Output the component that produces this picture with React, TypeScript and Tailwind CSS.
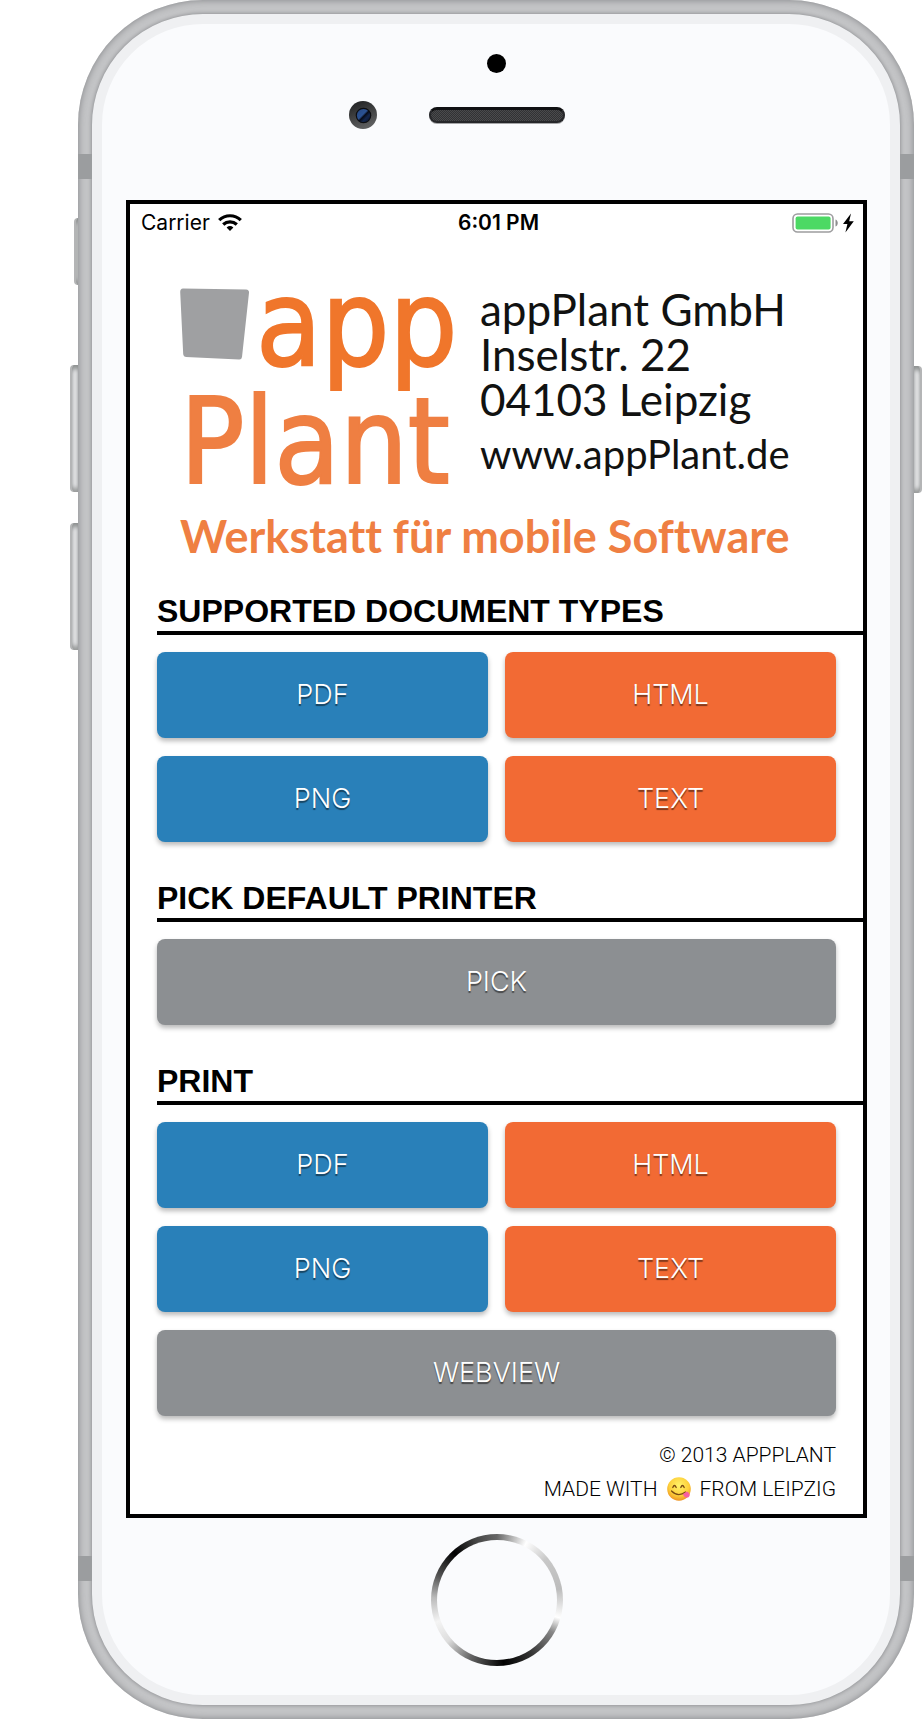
import React from "react";

const tones = {
  blue: "bg-[#2980b9]",
  orange: "bg-[#f26a34]",
  gray: "bg-[#8c8f92]",
};

type Tone = keyof typeof tones;

function ActionButton({ label, tone, wide = false }: { label: string; tone: Tone; wide?: boolean }) {
  return (
    <button
      type="button"
      className={`${tones[tone]} ${wide ? "col-span-2" : ""} h-[86px] rounded-lg font-[Inter,sans-serif] text-[27px] leading-8 font-light text-white shadow-[0_3px_5px_rgba(0,0,0,0.28)] [text-shadow:0_2px_1px_rgba(0,0,0,0.5)]`}
    >
      {label}
    </button>
  );
}

function Section({ title, children }: { title: string; children: React.ReactNode }) {
  return (
    <section className="mt-9 first:mt-[33px]">
      <h2 className="ml-[27px] border-b-4 border-black font-['Liberation_Sans',Arial,sans-serif] text-[32px] leading-10 font-bold whitespace-nowrap">
        {title}
      </h2>
      <div className="mt-[17px] mr-[27px] ml-[27px] grid grid-cols-2 gap-x-[17px] gap-y-[18px]">{children}</div>
    </section>
  );
}

function WifiIcon() {
  return (
    <svg viewBox="0 0 24 17" className="h-[17px] w-6" fill="none" stroke="black" strokeWidth="3.200" aria-hidden="true">
      <path d="M1.200 6.100a15.600 15.600 0 0 1 21.600 0" />
      <path d="M5.200 10.500a10 10 0 0 1 13.600 0" />
      <path d="M8.600 13.400a5.200 5.200 0 0 1 6.800 0L12 17z" fill="black" stroke="none" />
    </svg>
  );
}

function BatteryIcon() {
  return (
    <svg viewBox="0 0 64 20" className="h-5 w-16" role="img" aria-label="Battery charging">
      <rect x="1" y="1" width="40" height="18" rx="4.5" fill="white" stroke="#9d9d9f" strokeWidth="1.6" />
      <rect x="3.600" y="3.600" width="35" height="13" rx="2" fill="#4cd964" />
      <path d="M43.500 6.500c3 1 3 6 0 7z" fill="#8d8d8f" />
      <path d="M59 .600 51 11h4.400l-2 8.400 8.400-11.200h-4.600z" fill="black" />
    </svg>
  );
}

function Bucket() {
  return (
    <svg viewBox="0 0 70 72" className="h-[72px] w-[70px] shrink-0" aria-hidden="true">
      <path d="M3 .4 66 1.600q3.200.2 3 3.200L62 69q-.4 2.800-3 2.600L6 69q-2.600-.2-2.800-2.800L.2 4Q.2.400 3 .4z" fill="#9fa0a2" />
    </svg>
  );
}

function YumEmoji() {
  return (
    <svg viewBox="0 0 24 24" className="h-6 w-6" role="img" aria-label="Face savoring food">
      <defs>
        <radialGradient id="face" cx="50%" cy="35%" r="65%">
          <stop offset="0" stopColor="#fff36a" />
          <stop offset="0.65" stopColor="#fdcf3a" />
          <stop offset="1" stopColor="#ee9323" />
        </radialGradient>
      </defs>
      <circle cx="12" cy="12" r="11.800" fill="url(#face)" />
      <path d="M5.800 10.500q1.600-4 3.400 0M13.800 10.500q1.600-4 3.400 0" fill="none" stroke="#7a4a12" strokeWidth="1.300" strokeLinecap="round" />
      <path d="M4.500 14q6.500 6.500 14 1" fill="none" stroke="#7a4a12" strokeWidth="1.200" strokeLinecap="round" />
      <path d="M15.800 17.200l4-2.600c3 1 4 4.400 1.700 5.600-2.200 1.200-4.600-.4-5.700-3z" fill="#f75fa0" />
    </svg>
  );
}

function Camera() {
  return (
    <svg viewBox="0 0 28 28" className="h-7 w-7" aria-hidden="true">
      <defs>
        <linearGradient id="rim" x1="0" y1="0" x2="0.4" y2="1">
          <stop offset="0" stopColor="#1c1d1e" />
          <stop offset="1" stopColor="#5c5d5e" />
        </linearGradient>
        <linearGradient id="lens" x1="0.1" y1="0.1" x2="0.9" y2="0.9">
          <stop offset="0" stopColor="#274a86" />
          <stop offset="0.42" stopColor="#2b5292" />
          <stop offset="0.55" stopColor="#070b18" />
          <stop offset="0.75" stopColor="#14264c" />
          <stop offset="1" stopColor="#0a1530" />
        </linearGradient>
      </defs>
      <circle cx="14" cy="14" r="14" fill="url(#rim)" />
      <circle cx="14.500" cy="14.500" r="7.800" fill="#0b0c10" />
      <circle cx="14.500" cy="14.500" r="6.600" fill="url(#lens)" />
    </svg>
  );
}

const sideKey =
  "rounded-l-[4px] border-l-2 border-[#b4b5b6] bg-[#e4e5e7] shadow-[inset_0_5px_4px_-1px_#8f9292,inset_0_-5px_4px_-1px_#9c9e9e]";

export default function App() {
  return (
    <main className="flex bg-white pl-[70px] text-black">
      <div className="flex w-2 flex-col items-end pt-[218px]" aria-hidden="true">
        <div className={`${sideKey} h-[67px] w-1`} />
        <div className={`${sideKey} mt-20 h-[127px] w-2`} />
        <div className={`${sideKey} mt-[31px] h-[127px] w-2`} />
      </div>

      <div className="relative min-w-0 flex-1 rounded-[125px] bg-[#c3c4c6] p-[14px] shadow-[inset_0_0_7px_#808285]">
        <div className="absolute top-[154px] left-0 h-[25px] w-[14px] bg-[#9b9d9f]" />
        <div className="absolute top-[154px] right-0 h-[25px] w-[14px] bg-[#9b9d9f]" />
        <div className="absolute bottom-[138px] left-0 h-[25px] w-[14px] bg-[#9b9d9f]" />
        <div className="absolute right-0 bottom-[138px] h-[25px] w-[14px] bg-[#9b9d9f]" />

        <div className="rounded-[111px] border-[10px] border-[#eff0f2] bg-[#fafbfd] pt-[30px] pr-[23px] pb-[29px] pl-6 shadow-[0_0_4px_#808285]">
          <div className="flex flex-col items-center gap-7" aria-hidden="true">
            <div className="size-[19px] rounded-full bg-black" />
            <div className="grid w-full grid-cols-[1fr_136px_1fr] items-center">
              <div className="flex justify-end pr-[52px]">
                <Camera />
              </div>
              <div className="h-4 rounded-full border-2 border-t-[3px] border-[#26272a] border-t-[#101113] bg-[#3d3e40] bg-[repeating-conic-gradient(#4a4b4d_0%_25%,#313234_0%_50%)] bg-[length:2px_2px] shadow-[0_1px_0_#a5a6a8]" />
            </div>
          </div>

          <div className="mt-[71px] border-4 border-black bg-white pb-2">
            <div className="grid h-[37px] grid-cols-[1fr_auto_1fr] items-center pr-[7px] pl-[11px] font-[Inter,sans-serif] text-[21px] leading-6">
              <div className="flex items-center gap-2">
                <span>Carrier</span>
                <WifiIcon />
              </div>
              <time className="font-semibold">6:01 PM</time>
              <div className="flex justify-end">
                <BatteryIcon />
              </div>
            </div>

            <header className="px-[50px] pt-6">
              <div className="flex gap-[30px]">
                <div className="w-[270px] font-['DejaVu_Sans_Condensed','DejaVu_Sans',sans-serif] text-[119px] leading-[118px] whitespace-nowrap [-webkit-text-stroke:2px_currentColor]">
                  <div className="flex items-center gap-[6px] text-[#f0762b]">
                    <Bucket />
                    <span>app</span>
                  </div>
                  <div className="text-[#ef7f42]">Plant</div>
                </div>
                <address className="pt-[22px] font-[Lato,sans-serif] text-[44px] leading-[45px] whitespace-nowrap text-[#111211] not-italic">
                  <p>appPlant GmbH</p>
                  <p>Inselstr. 22</p>
                  <p>04103 Leipzig</p>
                  <p className="mt-[10px] text-[40px]">
                    <a href="http://www.appPlant.de">www.appPlant.de</a>
                  </p>
                </address>
              </div>
              <p className="mt-[13px] font-[Lato,sans-serif] text-[45px] leading-[44px] font-bold whitespace-nowrap text-[#ef7f42] [font-variant-ligatures:none]">
                Werkstatt für mobile Software
              </p>
            </header>

            <div>
              <Section title="SUPPORTED DOCUMENT TYPES">
                <ActionButton label="PDF" tone="blue" />
                <ActionButton label="HTML" tone="orange" />
                <ActionButton label="PNG" tone="blue" />
                <ActionButton label="TEXT" tone="orange" />
              </Section>
              <Section title="PICK DEFAULT PRINTER">
                <ActionButton label="PICK" tone="gray" wide />
              </Section>
              <Section title="PRINT">
                <ActionButton label="PDF" tone="blue" />
                <ActionButton label="HTML" tone="orange" />
                <ActionButton label="PNG" tone="blue" />
                <ActionButton label="TEXT" tone="orange" />
                <ActionButton label="WEBVIEW" tone="gray" wide />
              </Section>
            </div>

            <footer className="mt-[22px] mr-[27px] flex flex-col items-end font-[Roboto,sans-serif] text-[21px] leading-[34px] font-light">
              <p>© 2013 APPPLANT</p>
              <p className="flex items-center gap-[9px]">
                MADE WITH <YumEmoji /> FROM LEIPZIG
              </p>
            </footer>
          </div>

          <div className="mt-4 flex justify-center">
            <button
              type="button"
              aria-label="Home"
              className="size-[132px] rounded-full bg-[conic-gradient(#666_0deg,#fff_27deg,#c8c8c8_50deg,#bcbcbc_80deg,#fff_106deg,#888_120deg,#333_148deg,#000_174deg,#666_205deg,#ddd_230deg,#f4f4f4_250deg,#bbb_272deg,#555_292deg,#000_318deg,#444_340deg,#666_360deg)] p-[6px]"
            >
              <span className="block size-full rounded-full bg-[#fafbfd]" />
            </button>
          </div>
        </div>
      </div>

      <div className="w-2 pt-[366px]" aria-hidden="true">
        <div className="h-[127px] rounded-r-[4px] border-r-2 border-[#b4b5b6] bg-[#e4e5e7] shadow-[inset_0_5px_4px_-1px_#8f9292,inset_0_-5px_4px_-1px_#9c9e9e]" />
      </div>
    </main>
  );
}
